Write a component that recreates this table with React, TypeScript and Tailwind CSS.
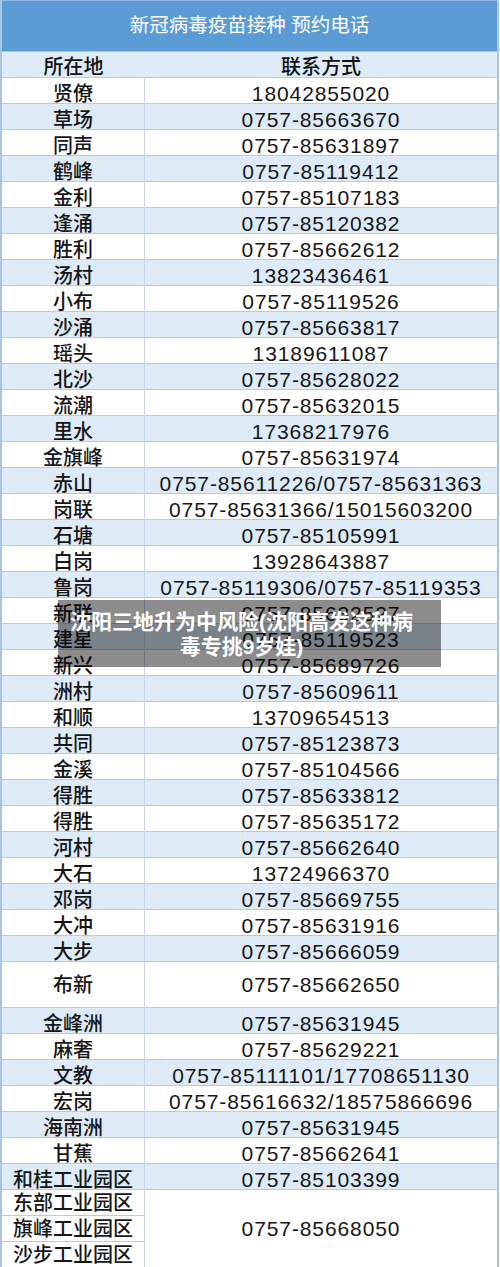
const rows: [string, string][] = [
  ['贤僚', '18042855020'],
  ['草场', '0757-85663670'],
  ['同声', '0757-85631897'],
  ['鹤峰', '0757-85119412'],
  ['金利', '0757-85107183'],
  ['逢涌', '0757-85120382'],
  ['胜利', '0757-85662612'],
  ['汤村', '13823436461'],
  ['小布', '0757-85119526'],
  ['沙涌', '0757-85663817'],
  ['瑶头', '13189611087'],
  ['北沙', '0757-85628022'],
  ['流潮', '0757-85632015'],
  ['里水', '17368217976'],
  ['金旗峰', '0757-85631974'],
  ['赤山', '0757-85611226/0757-85631363'],
  ['岗联', '0757-85631366/15015603200'],
  ['石塘', '0757-85105991'],
  ['白岗', '13928643887'],
  ['鲁岗', '0757-85119306/0757-85119353'],
  ['新联', '0757-85632527'],
  ['建星', '0757-85119523'],
  ['新兴', '0757-85689726'],
  ['洲村', '0757-85609611'],
  ['和顺', '13709654513'],
  ['共同', '0757-85123873'],
  ['金溪', '0757-85104566'],
  ['得胜', '0757-85633812'],
  ['得胜', '0757-85635172'],
  ['河村', '0757-85662640'],
  ['大石', '13724966370'],
  ['邓岗', '0757-85669755'],
  ['大冲', '0757-85631916'],
  ['大步', '0757-85666059'],
  ['布新', '0757-85662650'],
  ['金峰洲', '0757-85631945'],
  ['麻奢', '0757-85629221'],
  ['文教', '0757-85111101/17708651130'],
  ['宏岗', '0757-85616632/18575866696'],
  ['海南洲', '0757-85631945'],
  ['甘蕉', '0757-85662641'],
  ['和桂工业园区', '0757-85103399'],
];

const font = { fontFamily: '"Liberation Sans", "Noto Sans CJK SC", sans-serif' };

function Row({ place, phone, i }: { place: string; phone: string; i: number }) {
  const tall = place === '布新';
  return (
    <div
      className={`grid grid-cols-[143px_1fr] border-b border-[#b3cde8] ${tall ? 'h-[46px]' : 'h-[26px]'} ${i % 2 === 1 ? 'bg-[#deebf7]' : 'bg-white'}`}
    >
      <div className="flex items-center justify-center border-r border-[#c3d6ea] text-[20px] font-medium text-[#161616]">
        {place}
      </div>
      <div className="flex items-center justify-center text-[21px] tracking-[0.9px] text-[#161616]">
        {phone}
      </div>
    </div>
  );
}

export default function App() {
  return (
    <div className="relative h-[1267px] w-[500px] bg-white" style={font}>
      <div className="w-[499px] border-x-2 border-b-2 border-[#a9c4e2]">
        <div className="flex h-[52px] items-center justify-center border-t border-b border-t-[#8fb6e3] border-b-[#a9c4e2] bg-[#5b9bd6] text-[19.5px] text-white">
          新冠病毒疫苗接种 预约电话
        </div>
        <div className="grid h-[26px] grid-cols-[143px_1fr] border-b border-[#b3cde8] bg-[#deebf7] text-[20px] font-medium text-[#111]">
          <div className="flex items-center justify-center">所在地</div>
          <div className="flex items-center justify-center">联系方式</div>
        </div>
        {rows.map(([place, phone], i) => (
          <Row key={i} place={place} phone={phone} i={i} />
        ))}
        <div className="grid grid-cols-[143px_1fr] bg-white">
          <div className="border-r border-[#c3d6ea] text-[20px] font-medium text-[#161616]">
            <div className="flex h-[26px] items-center justify-center border-b border-[#b3cde8]">东部工业园区</div>
            <div className="flex h-[26px] items-center justify-center border-b border-[#b3cde8]">旗峰工业园区</div>
            <div className="flex h-[25px] items-center justify-center">沙步工业园区</div>
          </div>
          <div className="flex items-center justify-center text-[21px] tracking-[0.9px] text-[#161616]">
            0757-85668050
          </div>
        </div>
      </div>

      <div className="absolute left-[58px] top-[600px] flex h-[67px] w-[383px] flex-col items-center justify-center bg-black/45 pr-[16px] text-[21px] font-bold leading-[25px] text-white">
        <span className="whitespace-nowrap">沈阳三地升为中风险(沈阳高发这种病</span>
        <span className="whitespace-nowrap">毒专挑9岁娃)</span>
      </div>
    </div>
  );
}
